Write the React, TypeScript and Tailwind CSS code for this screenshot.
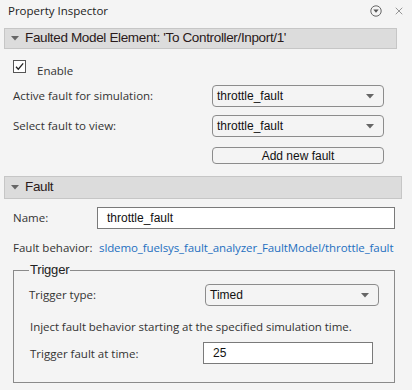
import { X } from 'lucide-react'

const ui = { fontFamily: '"Open Sans", "Noto Sans", sans-serif' }
const head = { fontFamily: '"Liberation Sans", Arial, sans-serif' }

function Caret({ className = '' }: { className?: string }) {
  return (
    <svg width="8" height="5" viewBox="0 0 8 5" className={className}>
      <path d="M0 0 L8 0 L4 4.5 Z" fill="#666" />
    </svg>
  )
}

function SectionHeader({ title, className = '' }: { title: string; className?: string }) {
  return (
    <div
      className={`mx-[4px] flex items-center gap-[6px] border border-[#c6c6c6] bg-[#dcdcdc] pl-[6px] text-[13.5px] tracking-[-0.35px] text-[#2a1a1a] ${className}`}
      style={head}
    >
      <Caret />
      <span>{title}</span>
    </div>
  )
}

function Dropdown({ value, className = '' }: { value: string; className?: string }) {
  return (
    <div
      className={`flex h-[22px] items-center justify-between rounded-[4px] border border-[#8c8c8c] pl-[4px] pr-[9px] text-[12px] text-[#111] ${className}`}
      style={head}
    >
      <span>{value}</span>
      <Caret />
    </div>
  )
}

export default function App() {
  return (
    <div className="h-[390px] w-[412px] overflow-hidden bg-[#f4f4f4] text-[#333]" style={ui}>
      {/* title bar */}
      <div className="flex h-[22px] items-center justify-between pl-[8px] pr-[7px]">
        <span className="text-[11.5px] text-[#222]">Property Inspector</span>
        <div className="flex items-center gap-[11px]">
          <svg width="12" height="12" viewBox="0 0 12 12">
            <circle cx="6" cy="6" r="5.2" fill="none" stroke="#666" strokeWidth="1" />
            <path d="M3.3 4.5 L8.7 4.5 L6 7.8 Z" fill="#555" />
          </svg>
          <X size={12} strokeWidth={1.5} className="text-[#777]" />
        </div>
      </div>

      <SectionHeader title="Faulted Model Element: 'To Controller/Inport/1'" className="mt-[6px] h-[21px] w-[393px]" />

      <div className="pl-[13px]">
        <div className="mt-[11px] flex h-[13px] items-center">
          <div className="flex h-[13px] w-[13px] items-center justify-center border border-[#555] bg-white">
            <svg width="11" height="11" viewBox="0 0 11 11">
              <path d="M2 5.8 L4.3 8.2 L9.2 2.4" fill="none" stroke="#222" strokeWidth="1.3" />
            </svg>
          </div>
          <span className="ml-[11px] mt-[8px] text-[11.5px]">Enable</span>
        </div>

        <div className="mt-[12px] flex items-center">
          <span className="w-[199px] text-[11.5px]">Active fault for simulation:</span>
          <Dropdown value="throttle_fault" className="w-[172px]" />
        </div>
        <div className="mt-[8px] flex items-center">
          <span className="w-[199px] text-[11.5px]">Select fault to view:</span>
          <Dropdown value="throttle_fault" className="w-[172px]" />
        </div>
        <div className="mt-[10px] flex">
          <div
            className="ml-[199px] flex h-[17px] w-[172px] items-center justify-center rounded-[4px] border border-[#8c8c8c] text-[12px] text-[#111]"
            style={head}
          >
            Add new fault
          </div>
        </div>
      </div>

      <SectionHeader title="Fault" className="mt-[12px] h-[23px] w-[398px]" />

      <div className="pl-[13px]">
        <div className="mt-[8px] flex items-center">
          <span className="w-[84px] text-[11.5px]">Name:</span>
          <div
            className="flex h-[22px] w-[298px] items-center border border-[#7a7a7a] bg-white pl-[9px] text-[12px] text-[#111]"
            style={head}
          >
            throttle_fault
          </div>
        </div>
        <div className="mt-[9px] flex h-[20px] items-center">
          <span className="w-[86px] text-[11.5px]">Fault behavior:</span>
          <span className="text-[11.5px] tracking-[-0.1px] text-[#1e6fc0]">
            sldemo_fuelsys_fault_analyzer_FaultModel/throttle_fault
          </span>
        </div>

        <fieldset className="mt-[3px] h-[122px] w-[382px] border border-[#8a8a8a] px-[15px]">
          <legend className="px-[1px] text-[13px] leading-[18px] tracking-[-0.2px] text-[#222]" style={head}>
            Trigger
          </legend>
          <div className="mt-[5px] flex items-center">
            <span className="w-[176px] text-[11.5px]">Trigger type:</span>
            <Dropdown value="Timed" className="w-[174px]" />
          </div>
          <div className="mt-[12px] pl-[1px] text-[11.5px] tracking-[-0.05px]">
            Inject fault behavior starting at the specified simulation time.
          </div>
          <div className="mt-[7px] flex items-center pl-[1px]">
            <span className="w-[173px] text-[11.5px]">Trigger fault at time:</span>
            <div
              className="flex h-[22px] w-[170px] items-center border border-[#7a7a7a] bg-white pl-[9px] text-[12px] text-[#111]"
              style={head}
            >
              25
            </div>
          </div>
        </fieldset>
      </div>
    </div>
  )
}
